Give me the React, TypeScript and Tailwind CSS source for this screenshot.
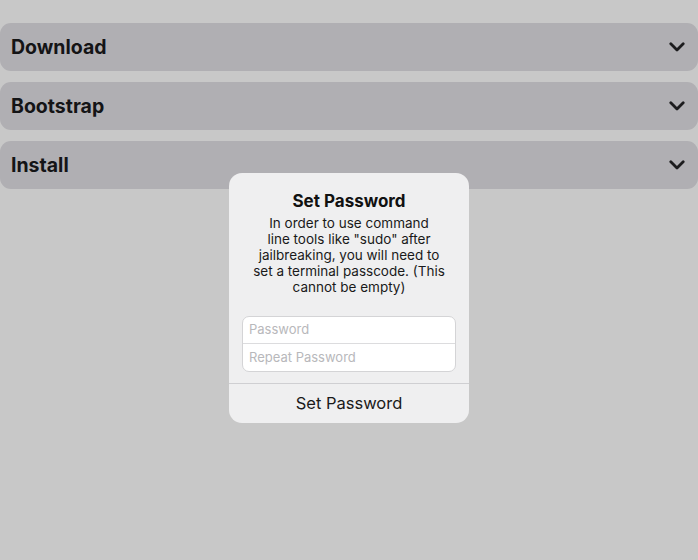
import React from 'react';

const sections = ['Download', 'Bootstrap', 'Install'];

function Chevron() {
  return (
    <svg width="16" height="10" viewBox="0 0 16 10" fill="none" className="text-[#1c1c1e]">
      <path d="M1.8 1.8 L8 8 L14.2 1.8" stroke="currentColor" strokeWidth="2.8" strokeLinecap="round" strokeLinejoin="round" />
    </svg>
  );
}

export default function App() {
  return (
    <div className="relative w-[698px] h-[560px] bg-[#c8c8c8] overflow-hidden font-['Inter','Liberation_Sans',sans-serif]">
      <div className="flex flex-col gap-[11px] pt-[23px]">
        {sections.map(name => (
          <div key={name} className="h-[48px] rounded-[11px] bg-[#b0afb3] flex items-center justify-between pl-[11px] pr-[13px]">
            <span className="text-[19.5px] font-bold text-[#141416] pt-[2px]">{name}</span>
            <Chevron />
          </div>
        ))}
      </div>

      <div className="absolute inset-0 flex justify-center pt-[173px]">
        <div className="w-[240px] h-[250px] rounded-[13px] bg-[#efeff0] flex flex-col">
          <div className="flex flex-col items-center px-[14px] pt-[18px]">
            <h2 className="text-[17px] font-bold text-[#111] leading-[20px]">Set Password</h2>
            <p className="mt-[4px] text-[13.5px] leading-[16px] text-[#1a1a1a] text-center">
              In order to use command<br />
              line tools like "sudo" after<br />
              jailbreaking, you will need to<br />
              set a terminal passcode. (This<br />
              cannot be empty)
            </p>
          </div>
          <div className="mx-[13px] mt-[21px] rounded-[7px] border border-[#d4d4d6] bg-white overflow-hidden">
            <div className="h-[27px] flex items-center px-[6px] text-[13px] text-[#b8b8bb] border-b border-[#dcdcde]">Password</div>
            <div className="h-[27px] flex items-center px-[6px] text-[13px] text-[#b8b8bb]">Repeat Password</div>
          </div>
          <div className="mt-[11px] border-t border-[#cfcfd2] flex-1 flex items-center justify-center">
            <span className="text-[16.5px] text-[#1a1a1a]">Set Password</span>
          </div>
        </div>
      </div>
    </div>
  );
}
